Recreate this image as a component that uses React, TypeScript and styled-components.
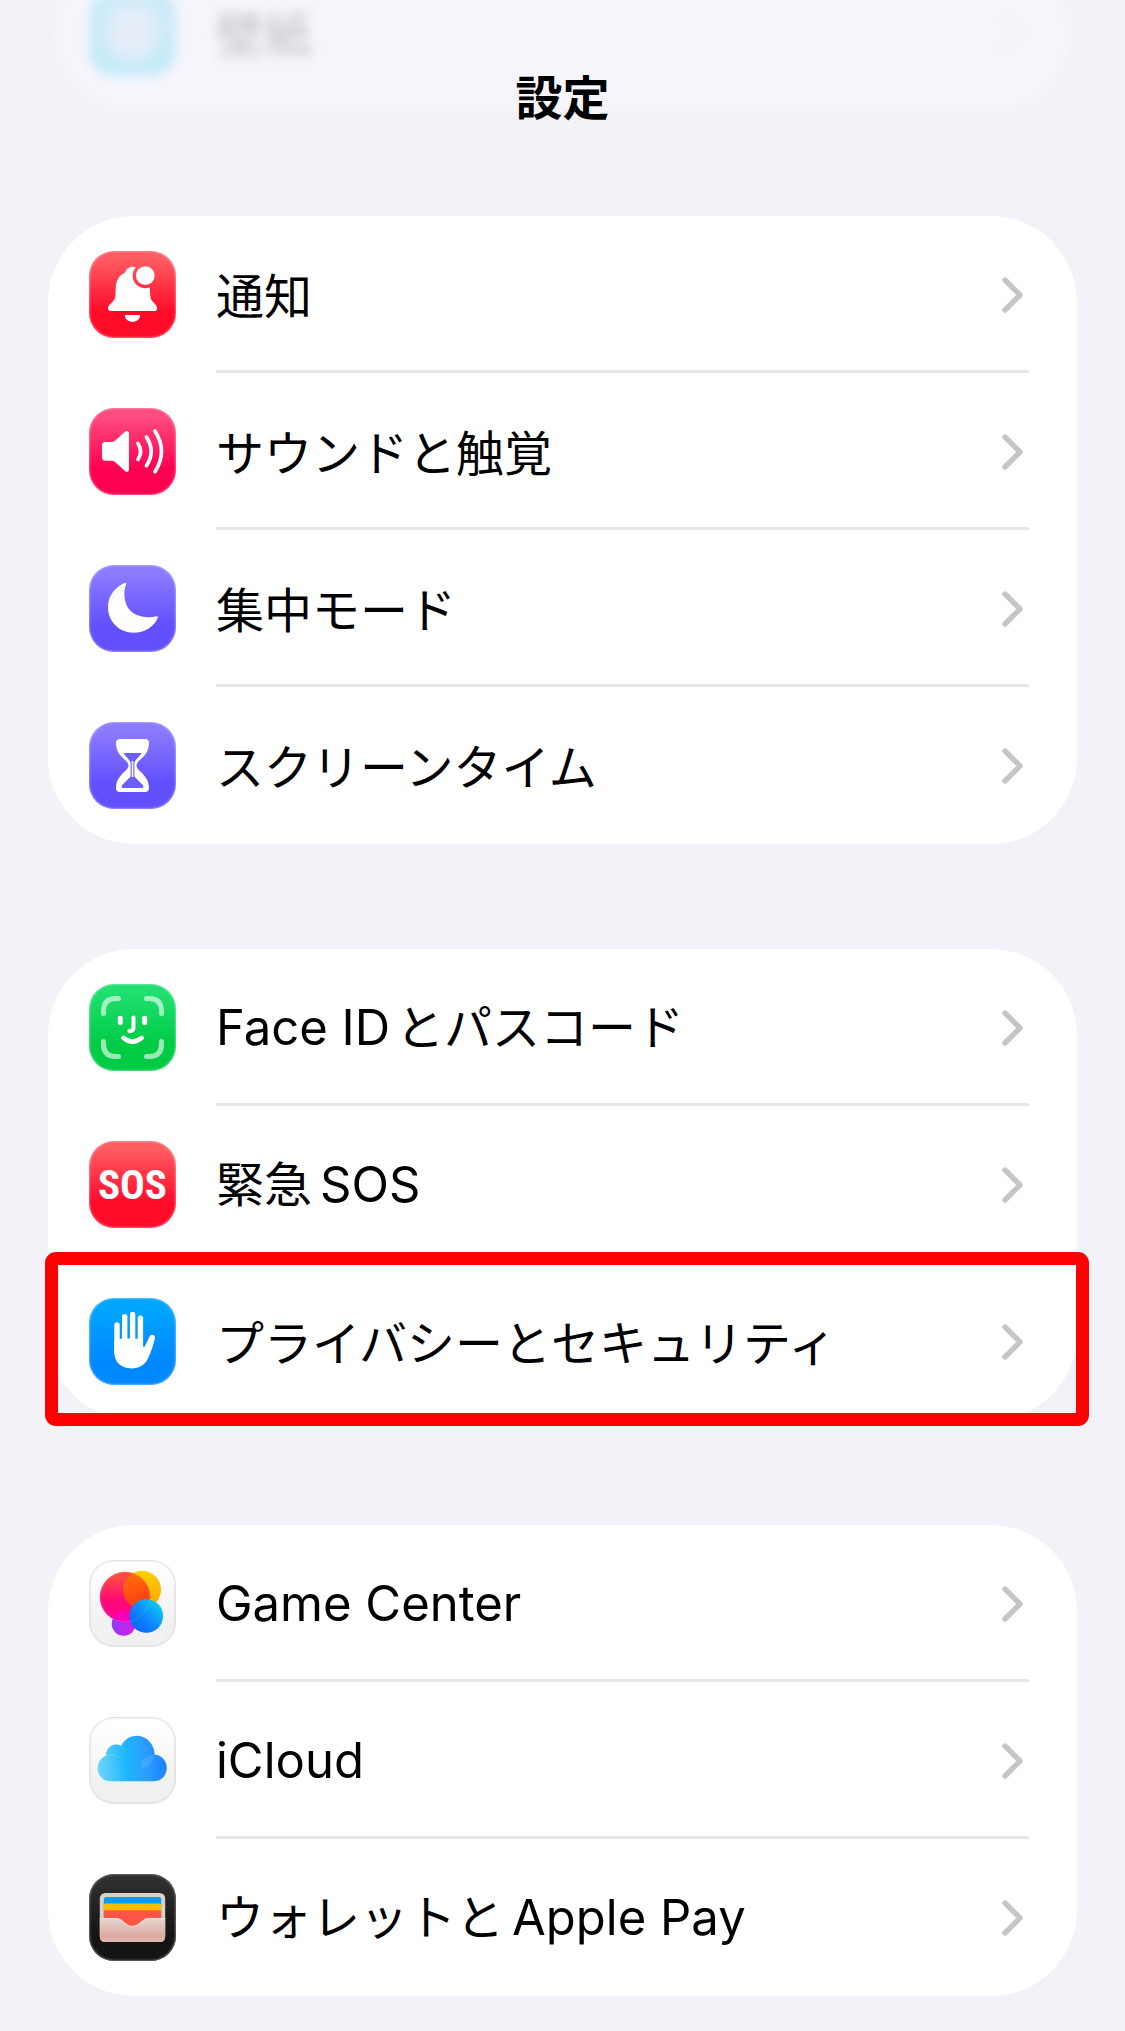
import React from "react";
import styled, { createGlobalStyle, css } from "styled-components";

const GlobalStyle = createGlobalStyle`
  * { box-sizing: border-box; }
  body {
    margin: 0;
    background: #f3f2f8;
    color: #000;
    font-family: "Noto Sans CJK JP", sans-serif;
  }
`;

const Page = styled.div`
  position: relative;
  overflow: hidden;
  padding: 0 48px 35px;
`;

const Header = styled.header`
  position: absolute;
  top: 0;
  left: 0;
  right: 0;
  z-index: 1;
  padding: 61px 0 32px;
  text-align: center;
`;

const Title = styled.h1`
  margin: 0;
  font-size: 47px;
  line-height: 68px;
  font-weight: 700;
`;

const Groups = styled.main`
  display: flex;
  flex-direction: column;
  gap: 105px;
`;

const Group = styled.ul<{ $behindHeader?: boolean }>`
  margin: 0;
  padding: 0;
  list-style: none;
  background: #fff;
  border-radius: 86px;

  ${(p) =>
    p.$behindHeader &&
    css`
      margin: -46px 8px 0;
      background: #f6f5fb;
      filter: blur(6px);

      & a {
        margin: 0 -8px;
      }
      & a > * {
        opacity: 0.22;
      }
      & a > svg {
        opacity: 0.12;
      }
    `}
`;

const Item = styled.li<{ $highlighted?: boolean }>`
  position: relative;

  & + &::before {
    content: "";
    position: absolute;
    top: -3px;
    left: 168px;
    right: 48px;
    height: 3px;
    background: #e6e6e6;
  }

  ${(p) =>
    p.$highlighted &&
    css`
      &::after {
        content: "";
        position: absolute;
        inset: -11px -12px -6px -3px;
        border: 13px solid #f00;
        border-radius: 11px;
        pointer-events: none;
      }
    `}
`;

const RowLink = styled.a`
  display: flex;
  align-items: center;
  height: 157px;
  padding: 0 54px 0 41px;
  color: inherit;
  text-decoration: none;
`;

const Label = styled.span`
  flex: 1;
  margin-left: 40px;
  padding-bottom: 4px;
  font-size: 48px;
  line-height: 60px;
  white-space: nowrap;
`;

const Latin = styled.span<{ $before?: boolean; $after?: boolean }>`
  margin-left: ${(p) => (p.$before ? 8 : 0)}px;
  margin-right: ${(p) => (p.$after ? 6 : 0)}px;
  font-family: Inter, sans-serif;
  font-size: 49px;
`;

const Tile = styled.span<{ $from: string; $to: string; $edge: string }>`
  display: flex;
  align-items: center;
  justify-content: center;
  width: 87px;
  height: 87px;
  border-radius: 25px;
  overflow: hidden;
  background: linear-gradient(${(p) => p.$from} 10%, ${(p) => p.$to} 70%);
  box-shadow: inset 0 0 2px 1px ${(p) => p.$edge};
`;

const Glyph = styled.svg`
  display: block;
  width: 87px;
  height: 87px;
`;

const SosText = styled.span`
  color: #fff;
  font-family: "Liberation Sans Narrow", "Roboto Condensed", Roboto, sans-serif;
  font-size: 41px;
  line-height: 44px;
  font-weight: 700;
`;

const ChevronIcon = styled.svg`
  width: 21px;
  height: 36px;
`;

const Chevron = () => (
  <ChevronIcon viewBox="0 0 21 36" aria-hidden="true">
    <path
      d="M3 3 L18 18 L3 33"
      fill="none"
      stroke="#c5c5c9"
      strokeWidth="5.4"
      strokeLinecap="round"
      strokeLinejoin="round"
    />
  </ChevronIcon>
);

const WallpaperGlyph = () => (
  <Glyph viewBox="0 0 87 87" aria-hidden="true">
    <defs>
      <radialGradient id="wp-bloom">
        <stop offset="0" stopColor="#c3d8f6" />
        <stop offset="0.5" stopColor="#a5d5f3" />
        <stop offset="1" stopColor="#a5d5f3" stopOpacity="0" />
      </radialGradient>
    </defs>
    <circle cx="43.5" cy="43.5" r="38" fill="url(#wp-bloom)" />
  </Glyph>
);

const BellGlyph = () => (
  <Glyph viewBox="0 0 87 87" aria-hidden="true">
    <defs>
      <mask id="bell-cut">
        <rect width="87" height="87" fill="#fff" />
        <circle cx="56.3" cy="24.7" r="12.6" fill="#000" />
      </mask>
    </defs>
    <path
      mask="url(#bell-cut)"
      fill="#fff"
      d="M43.7 15.7 C40 15.7 37 18 36.2 21.4 C30 24.4 27.3 29 26.8 36 C26.4 41 26.6 45 25.8 47.6 C24.6 51 19 53.8 19 57.6 C19 59.2 20 60 21.8 60 H65.4 C67.2 60 68.2 59.2 68.2 57.6 C68.2 53.8 62.8 51 61.8 47.6 C60.8 44 61.4 40 60.6 34 C59.8 27 56 22 51 20.5 C50 17.6 47.4 15.7 43.7 15.7 Z"
    />
    <circle cx="56.3" cy="24.7" r="9.4" fill="#fff" />
    <path fill="#fff" d="M35.8 64 H51.2 C51 68 47.8 70.8 43.5 70.8 C39.2 70.8 36 68 35.8 64 Z" />
  </Glyph>
);

const SpeakerGlyph = () => (
  <Glyph viewBox="0 0 87 87" aria-hidden="true">
    <path
      fill="#fff"
      d="M16.5 34 H23 Q24.6 34 25.8 32.9 L35.6 23.9 C37.6 22.2 40 22.8 40 25.5 V61.2 C40 63.9 37.6 64.5 35.6 62.8 L25.8 53.8 Q24.6 52.7 23 52.7 H16.5 Q13 52.7 13 49.2 V37.5 Q13 34 16.5 34 Z"
    />
    <g fill="none" stroke="#fff" strokeWidth="3.7" strokeLinecap="round">
      <path d="M49 35.4 Q54.2 43.4 49 51.4" />
      <path d="M57.4 29 Q67 43.4 57.4 57.8" />
      <path d="M66 23 Q79 43.4 66 63.8" />
    </g>
  </Glyph>
);

const MoonGlyph = () => (
  <Glyph viewBox="0 0 87 87" aria-hidden="true">
    <path
      fill="#fff"
      d="M37 19.6 C37.6 18.2 36.6 17.7 35.2 18.3 C25.5 22.3 19 31.5 19 42.3 C19 56.5 30.3 67.8 44.6 67.8 C55.5 67.8 65 61.7 68.7 53 C69.2 51.5 68.6 50.8 67 51.3 C64 52.2 61 52.4 58 52.2 C44 51.6 35.6 43.2 35.4 30 C35.4 26 35.7 22.8 37 19.6 Z"
    />
  </Glyph>
);

const HourglassGlyph = () => (
  <Glyph viewBox="0 0 87 87" aria-hidden="true">
    <path
      fill="#fff"
      d="M31 17 H56 Q60 17 60 21 C60 31 54 35 49.5 39.3 Q47.4 41.8 47.4 43.5 Q47.4 45.2 49.5 47.7 C54 52 60 56.5 60 66 Q60 70 56 70 H31 Q27 70 27 66 C27 56.5 33 52 37.5 47.7 Q39.6 45.2 39.6 43.5 Q39.6 41.8 37.5 39.3 C33 35 27 31 27 21 Q27 17 31 17 Z"
    />
    <path
      fill="#6d5efe"
      d="M34.6 31 H52.4 C51 34.2 46 37.5 45.4 41.5 V54.5 L54 63.3 Q55 66 53 66 H34 Q32 66 33 63.3 L41.6 54.5 V41.5 C41 37.5 36 34.2 34.6 31 Z"
    />
    <path d="M43.5 39 V55" stroke="#fff" strokeWidth="1.6" />
  </Glyph>
);

const FaceGlyph = () => (
  <Glyph viewBox="0 0 87 87" aria-hidden="true">
    <g fill="none" strokeLinecap="round">
      <g stroke="#fff" strokeOpacity="0.6" strokeWidth="5">
        <path d="M14.5 29.5 V27 Q14.5 14.5 27 14.5 H29.5" />
        <path d="M57.5 14.5 H60 Q72.5 14.5 72.5 27 V29.5" />
        <path d="M72.5 57.5 V60 Q72.5 72.5 60 72.5 H57.5" />
        <path d="M29.5 72.5 H27 Q14.5 72.5 14.5 60 V57.5" />
      </g>
      <g stroke="#fff" strokeWidth="5">
        <path d="M31.3 34.3 V38.5" />
        <path d="M55.7 34.3 V38.5" />
        <path strokeWidth="4" d="M44.5 33.5 V43.5 Q44.5 47 40.3 47" />
        <path strokeWidth="4.4" d="M34.3 53.8 Q43.5 61.6 52.7 53.8" />
      </g>
    </g>
  </Glyph>
);

const HandGlyph = () => (
  <Glyph viewBox="0 0 87 87" aria-hidden="true">
    <g stroke="#fff" strokeWidth="5.4" strokeLinecap="round">
      <path d="M28 27 V54" />
      <path d="M35.7 18.7 V50" />
      <path d="M43.6 16.5 V50" />
      <path d="M51.4 20.2 V50" />
    </g>
    <path
      fill="#fff"
      d="M25.3 42.5 L33 40.5 H48 L54.1 48.5 Q55.6 49.5 56.4 47.3 L60.4 38.7 C62 35.6 66.8 36.6 65.9 40.2 C64 47.5 62 54.5 59 60.5 C55.5 67.3 50 70.4 42.5 70.4 C32 70.4 25.3 64 25.3 54.5 Z"
    />
  </Glyph>
);

const GameGlyph = () => (
  <Glyph viewBox="0 0 87 87" aria-hidden="true">
    <defs>
      <linearGradient id="g-red" x1="0" y1="0" x2="0" y2="1">
        <stop offset="0.1" stopColor="#ff4b45" />
        <stop offset="0.55" stopColor="#ff0a72" />
        <stop offset="1" stopColor="#ff009c" />
      </linearGradient>
      <linearGradient id="g-yellow" x1="0" y1="0" x2="0.3" y2="1">
        <stop offset="0" stopColor="#ffd800" />
        <stop offset="1" stopColor="#ffab00" />
      </linearGradient>
      <linearGradient id="g-orange" x1="0" y1="0" x2="0.5" y2="1">
        <stop offset="0" stopColor="#ff7a00" />
        <stop offset="1" stopColor="#ff4300" />
      </linearGradient>
      <linearGradient id="g-purple" x1="0" y1="0" x2="1" y2="0.2">
        <stop offset="0.1" stopColor="#8c38ff" />
        <stop offset="1" stopColor="#d022e0" />
      </linearGradient>
      <linearGradient id="g-blue" x1="0.2" y1="0.9" x2="0.9" y2="0.2">
        <stop offset="0" stopColor="#0a66ff" />
        <stop offset="0.45" stopColor="#0d86ff" />
        <stop offset="1" stopColor="#0cc8f4" />
      </linearGradient>
      <clipPath id="g-clip">
        <circle cx="36" cy="37" r="25.2" />
      </clipPath>
    </defs>
    <circle cx="34.7" cy="63.7" r="12" fill="url(#g-purple)" />
    <circle cx="53" cy="29.7" r="19" fill="url(#g-yellow)" />
    <circle cx="36" cy="37" r="25.2" fill="url(#g-red)" />
    <circle cx="53" cy="29.7" r="19" fill="url(#g-orange)" fillOpacity="0.85" clipPath="url(#g-clip)" />
    <circle cx="34.7" cy="63.7" r="12" fill="#f000d0" fillOpacity="0.7" clipPath="url(#g-clip)" />
    <circle cx="57.3" cy="56" r="16.8" fill="url(#g-blue)" />
    <circle cx="36" cy="37" r="24.7" fill="none" stroke="#fff" strokeOpacity="0.15" />
  </Glyph>
);

const CloudGlyph = () => (
  <Glyph viewBox="0 0 87 87" aria-hidden="true">
    <defs>
      <linearGradient id="c-fill" gradientUnits="userSpaceOnUse" x1="9" y1="50" x2="78" y2="44">
        <stop offset="0" stopColor="#6fd6fd" />
        <stop offset="0.42" stopColor="#1bb6fb" />
        <stop offset="0.7" stopColor="#2c9dff" />
        <stop offset="1" stopColor="#1a80ff" />
      </linearGradient>
    </defs>
    <path
      fill="url(#c-fill)"
      d="M22 64.3 C14 64.3 8.7 58.8 8.7 51.6 C8.7 45.5 12 40.8 16.9 38.8 C17 32 21.5 27.4 27.2 27.4 Q30 27.4 32.2 28.8 C35 22.6 41 18.7 47.7 18.7 C57.5 18.7 65 26.5 65.8 37.7 C73 38 77.7 44 77.7 51 C77.7 58.5 72 64.3 64.8 64.3 Z"
    />
    <g fill="none" stroke="#fff" strokeOpacity="0.16">
      <path d="M17 38.8 C22 37.5 26 38 30 40.5" />
      <path d="M32.2 28.8 Q36 31.5 36.6 36" />
    </g>
    <path fill="#fff" fillOpacity="0.1" d="M65.6 38 C57 38 51 44 52.5 51 C59 50 65 45 65.6 38 Z" />
  </Glyph>
);

const WalletGlyph = () => (
  <Glyph viewBox="0 0 87 87" aria-hidden="true">
    <defs>
      <linearGradient id="w-pocket" x1="0" y1="0" x2="0" y2="1">
        <stop offset="0" stopColor="#e4d9d1" />
        <stop offset="0.75" stopColor="#dea9a1" />
        <stop offset="1" stopColor="#dcb8af" />
      </linearGradient>
    </defs>
    <rect x="10.8" y="19" width="65.4" height="49" rx="5.5" fill="#d8d3c7" />
    <rect x="14.8" y="23" width="57.4" height="24" rx="2.5" fill="#0a9cf5" />
    <path d="M14.8 38 V31.2 Q14.8 29.6 16.5 29.6 H70.5 Q72.2 29.6 72.2 31.2 V38 Z" fill="#fdbb05" />
    <path d="M14.8 56 V38 Q14.8 36.2 16.5 36.2 H70.5 Q72.2 36.2 72.2 38 V56 Z" fill="#ff5546" />
    <path
      d="M10.8 44 H26.5 C34 44 36 52 43.3 52 C50.6 52 52.6 44 60.2 44 H76.2 V62.5 Q76.2 68 70.7 68 H16.3 Q10.8 68 10.8 62.5 Z"
      fill="url(#w-pocket)"
    />
    <path
      d="M11.4 44.5 H26.5 C34 44.5 36 52.5 43.3 52.5 C50.6 52.5 52.6 44.5 60.2 44.5 H75.6"
      fill="none"
      stroke="#f3ebe5"
      strokeOpacity="0.7"
    />
  </Glyph>
);

type Entry = {
  id: string;
  label: React.ReactNode;
  icon: React.ReactNode;
  tile: [string, string, string];
  highlighted?: boolean;
};

const LIGHT_EDGE = "rgba(255, 255, 255, 0.35)";
const RED: [string, string, string] = ["#ff5b62", "#ff0b2a", LIGHT_EDGE];
const INDIGO: [string, string, string] = ["#8b7bff", "#6250ff", LIGHT_EDGE];
const WHITE: [string, string, string] = ["#ffffff", "#f1f1f1", "#dadada"];

const GROUPS: Entry[][] = [
  [
    { id: "notifications", label: "通知", icon: <BellGlyph />, tile: RED },
    {
      id: "sounds",
      label: "サウンドと触覚",
      icon: <SpeakerGlyph />,
      tile: ["#ff4b7d", "#ff0050", LIGHT_EDGE],
    },
    { id: "focus", label: "集中モード", icon: <MoonGlyph />, tile: INDIGO },
    { id: "screen-time", label: "スクリーンタイム", icon: <HourglassGlyph />, tile: INDIGO },
  ],
  [
    {
      id: "face-id",
      label: (
        <>
          <Latin $after>Face ID</Latin>とパスコード
        </>
      ),
      icon: <FaceGlyph />,
      tile: ["#1fe070", "#00cb45", LIGHT_EDGE],
    },
    {
      id: "sos",
      label: (
        <>
          緊急<Latin $before>SOS</Latin>
        </>
      ),
      icon: <SosText>SOS</SosText>,
      tile: RED,
    },
    {
      id: "privacy",
      label: "プライバシーとセキュリティ",
      icon: <HandGlyph />,
      tile: ["#00a6ff", "#0089ff", LIGHT_EDGE],
      highlighted: true,
    },
  ],
  [
    { id: "game-center", label: <Latin>Game Center</Latin>, icon: <GameGlyph />, tile: WHITE },
    { id: "icloud", label: <Latin>iCloud</Latin>, icon: <CloudGlyph />, tile: WHITE },
    {
      id: "wallet",
      label: (
        <>
          ウォレットと<Latin $before>Apple Pay</Latin>
        </>
      ),
      icon: <WalletGlyph />,
      tile: ["#2e2e2e", "#141414", "#6a6a6a"],
    },
  ],
];

const WALLPAPER: Entry = {
  id: "wallpaper",
  label: "壁紙",
  icon: <WallpaperGlyph />,
  tile: ["#35c8ee", "#10c8ee", LIGHT_EDGE],
};

const Row = ({ entry }: { entry: Entry }) => (
  <Item $highlighted={entry.highlighted}>
    <RowLink href={`#${entry.id}`}>
      <Tile $from={entry.tile[0]} $to={entry.tile[1]} $edge={entry.tile[2]}>
        {entry.icon}
      </Tile>
      <Label>{entry.label}</Label>
      <Chevron />
    </RowLink>
  </Item>
);

export default function App() {
  return (
    <Page>
      <GlobalStyle />
      <Header>
        <Title>設定</Title>
      </Header>
      <Groups>
        <Group $behindHeader>
          <Row entry={WALLPAPER} />
        </Group>
        {GROUPS.map((entries) => (
          <Group key={entries[0].id}>
            {entries.map((entry) => (
              <Row key={entry.id} entry={entry} />
            ))}
          </Group>
        ))}
      </Groups>
    </Page>
  );
}
